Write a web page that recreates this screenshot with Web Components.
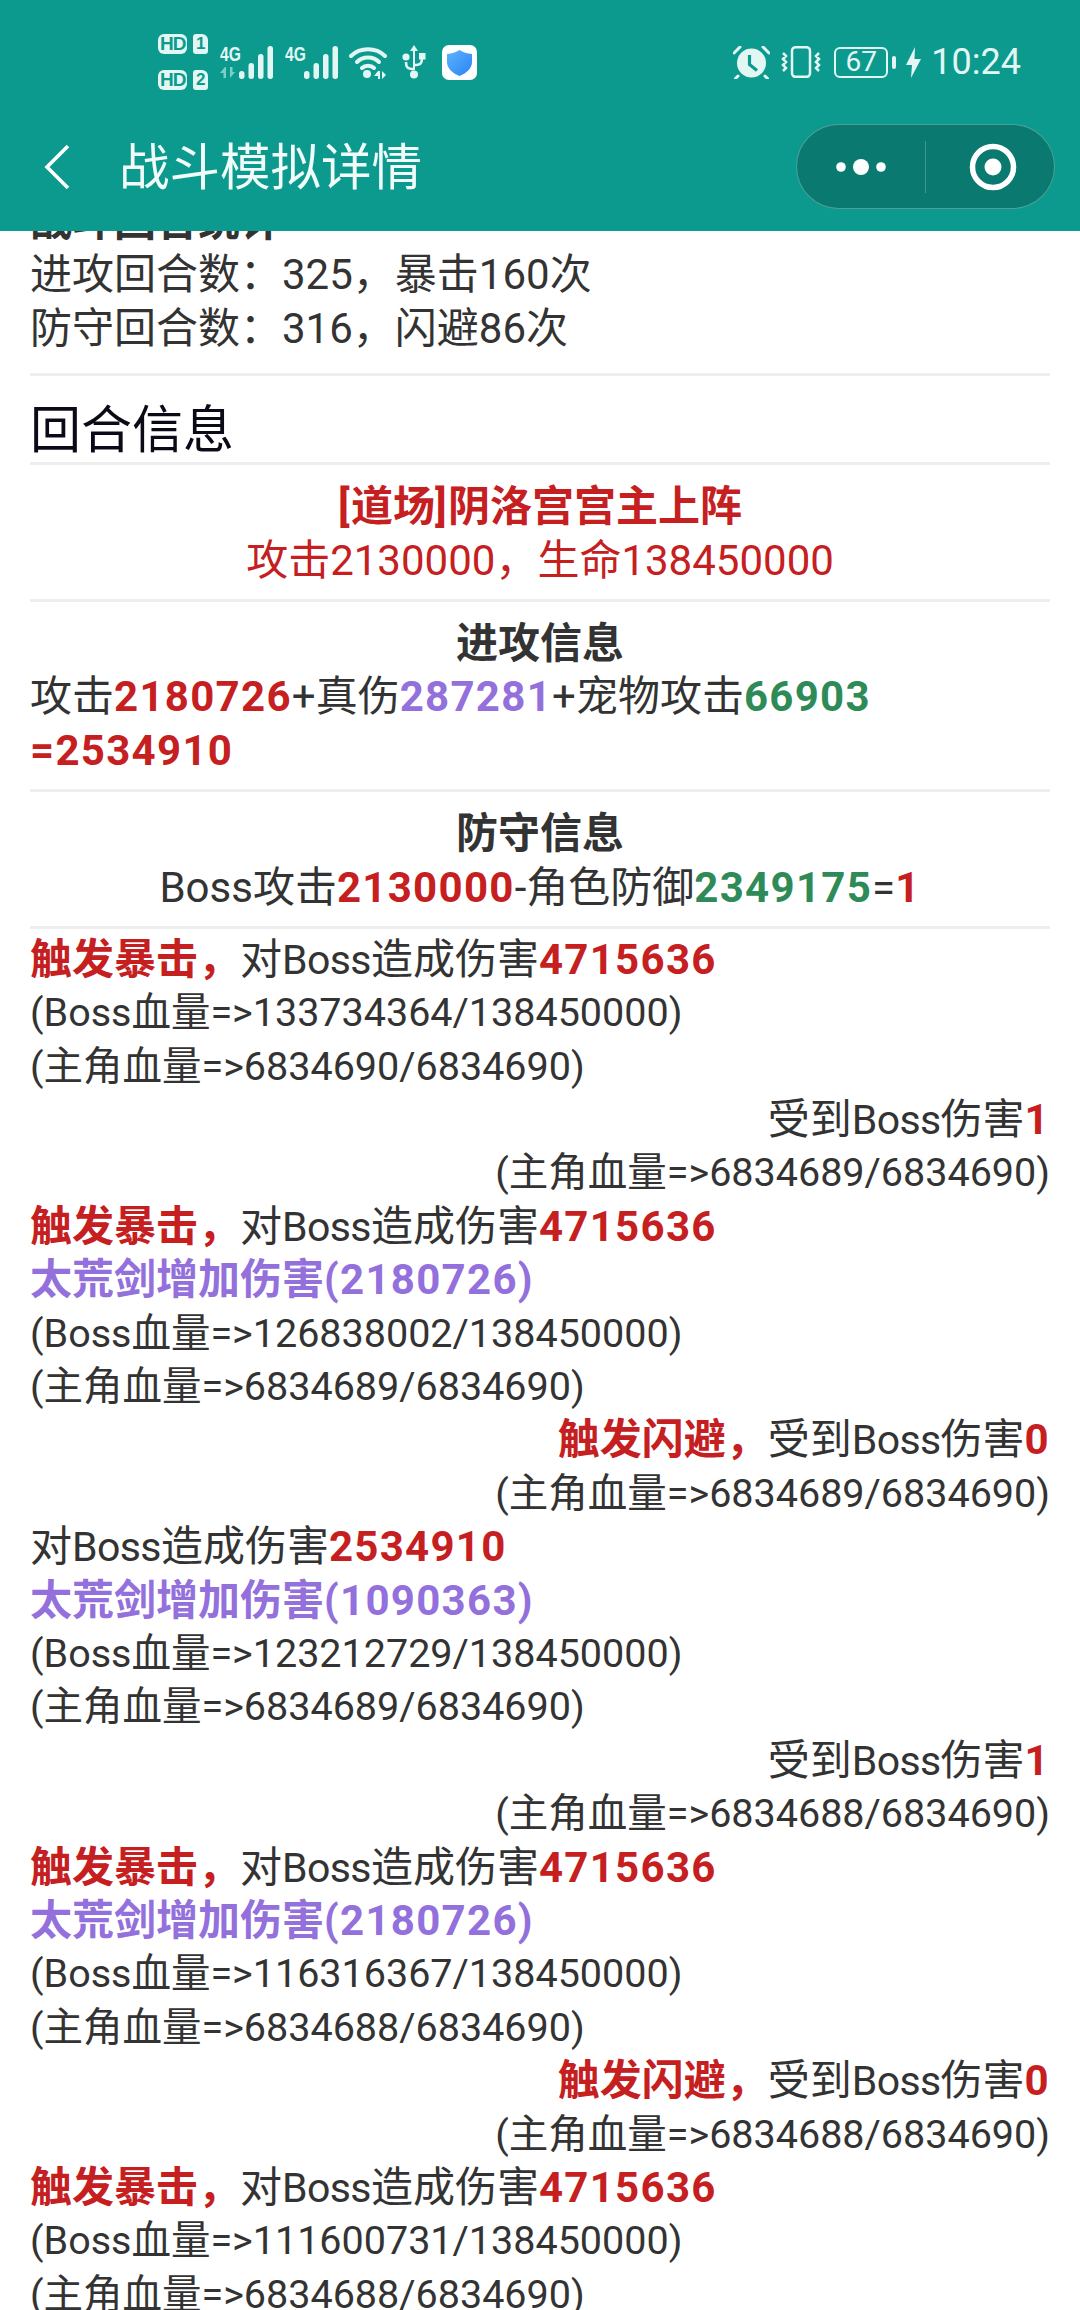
<!DOCTYPE html>
<html lang="zh">
<head>
<meta charset="utf-8">
<title>战斗模拟详情</title>
<style>
    html, body { margin: 0; padding: 0; background: #fff; }
    body { width: 1080px; height: 2310px; overflow: hidden; font-family: Roboto, "Noto Sans CJK SC", sans-serif; }
</style>
</head>
<body>
<battle-page>
    <phone-status slot="status"></phone-status>
    <nav-bar slot="nav" title="战斗模拟详情"></nav-bar>

    <info-block>
        <log-line><log-hl kind="bold">战斗回合统计</log-hl></log-line>
        <log-line>进攻回合数：325，暴击160次</log-line>
        <log-line>防守回合数：316，闪避86次</log-line>
    </info-block>
    <info-block kind="title">回合信息</info-block>
    <info-block kind="round">
        <log-line align="center"><log-hl kind="red">[道场]阴洛宫宫主上阵</log-hl></log-line>
        <log-line align="center" color="red">攻击2130000，生命138450000</log-line>
    </info-block>
    <info-block kind="round">
        <log-line align="center"><log-hl kind="bold">进攻信息</log-hl></log-line>
        <log-line>攻击<log-hl kind="red">2180726</log-hl>+真伤<log-hl kind="purple">287281</log-hl>+宠物攻击<log-hl kind="green">66903</log-hl></log-line>
        <log-line><log-hl kind="red">=2534910</log-hl></log-line>
    </info-block>
    <info-block kind="round">
        <log-line align="center"><log-hl kind="bold">防守信息</log-hl></log-line>
        <log-line align="center">Boss攻击<log-hl kind="red">2130000</log-hl>-角色防御<log-hl kind="green">2349175</log-hl>=<log-hl kind="red">1</log-hl></log-line>
    </info-block>
    <info-block kind="log">
        <log-line><log-hl kind="red">触发暴击，</log-hl>对Boss造成伤害<log-hl kind="red">4715636</log-hl></log-line>
        <log-line hp>(Boss血量=&gt;133734364/138450000)</log-line>
        <log-line hp>(主角血量=&gt;6834690/6834690)</log-line>
        <log-line align="right">受到Boss伤害<log-hl kind="red">1</log-hl></log-line>
        <log-line hp align="right">(主角血量=&gt;6834689/6834690)</log-line>

        <log-line><log-hl kind="red">触发暴击，</log-hl>对Boss造成伤害<log-hl kind="red">4715636</log-hl></log-line>
        <log-line><log-hl kind="purple">太荒剑增加伤害(2180726)</log-hl></log-line>
        <log-line hp>(Boss血量=&gt;126838002/138450000)</log-line>
        <log-line hp>(主角血量=&gt;6834689/6834690)</log-line>
        <log-line align="right"><log-hl kind="red">触发闪避，</log-hl>受到Boss伤害<log-hl kind="red">0</log-hl></log-line>
        <log-line hp align="right">(主角血量=&gt;6834689/6834690)</log-line>

        <log-line>对Boss造成伤害<log-hl kind="red">2534910</log-hl></log-line>
        <log-line><log-hl kind="purple">太荒剑增加伤害(1090363)</log-hl></log-line>
        <log-line hp>(Boss血量=&gt;123212729/138450000)</log-line>
        <log-line hp>(主角血量=&gt;6834689/6834690)</log-line>
        <log-line align="right">受到Boss伤害<log-hl kind="red">1</log-hl></log-line>
        <log-line hp align="right">(主角血量=&gt;6834688/6834690)</log-line>

        <log-line><log-hl kind="red">触发暴击，</log-hl>对Boss造成伤害<log-hl kind="red">4715636</log-hl></log-line>
        <log-line><log-hl kind="purple">太荒剑增加伤害(2180726)</log-hl></log-line>
        <log-line hp>(Boss血量=&gt;116316367/138450000)</log-line>
        <log-line hp>(主角血量=&gt;6834688/6834690)</log-line>
        <log-line align="right"><log-hl kind="red">触发闪避，</log-hl>受到Boss伤害<log-hl kind="red">0</log-hl></log-line>
        <log-line hp align="right">(主角血量=&gt;6834688/6834690)</log-line>

        <log-line><log-hl kind="red">触发暴击，</log-hl>对Boss造成伤害<log-hl kind="red">4715636</log-hl></log-line>
        <log-line hp>(Boss血量=&gt;111600731/138450000)</log-line>
        <log-line hp>(主角血量=&gt;6834688/6834690)</log-line>
    </info-block>
</battle-page>

<script>
const TEAL = '#0c9a8e';
const ICON = '#e2f7f4';

class BattlePage extends HTMLElement {
    connectedCallback() {
        const shadow = this.attachShadow({ mode: 'open' });
        shadow.innerHTML = `
            <style>
                :host { display: flex; flex-direction: column; width: 1080px; height: 2310px; overflow: hidden; }
                header { flex: none; height: 231px; background: ${TEAL}; position: relative; z-index: 1; }
                main { flex: 1; min-height: 0; overflow: hidden; padding: 0 30px; }
                .scrolled { margin-top: -36px; }
            </style>
            <header><slot name="status"></slot><slot name="nav"></slot></header>
            <main><div class="scrolled"><slot></slot></div></main>
        `;
    }
}

class PhoneStatus extends HTMLElement {
    connectedCallback() {
        const shadow = this.attachShadow({ mode: 'open' });
        const bars = `
            <rect x="0" y="25" width="5.500" height="8" rx="2.700"/>
            <rect x="9.500" y="17" width="5.500" height="16" rx="2.700"/>
            <rect x="19" y="8" width="5.500" height="25" rx="2.700"/>
            <rect x="28.500" y="0" width="5.500" height="33" rx="2.700"/>`;
        shadow.innerHTML = `
            <style>
                :host { display: flex; align-items: center; height: 124px; box-sizing: border-box; padding: 0 59px 0 158px; color: ${ICON}; font-family: Roboto, sans-serif; }
                svg { display: block; flex: none; fill: ${ICON}; }
                .hd { display: flex; flex-direction: column; gap: 16px; width: 50px; flex: none; }
                .hd-row { display: flex; gap: 6px; }
                .tag { height: 20px; background: ${ICON}; color: ${TEAL}; font: 700 19px/20px "Liberation Sans", sans-serif; text-align: center; }
                .tag.hd-t { width: 30px; border-radius: 6px; letter-spacing: -1px; }
                .tag.num { width: 15px; border-radius: 3px 6px 3px 3px; font-size: 17px; }
                .sig { position: relative; width: 53px; height: 33px; margin-left: 12px; flex: none; }
                .sig b { position: absolute; left: 0; top: 0; font: 700 20px/16px "Liberation Sans", sans-serif; transform: scaleX(.78); transform-origin: left top; }
                .sig svg.bars { position: absolute; right: 0; top: 0; }
                .sig svg.updown { position: absolute; left: 0; top: 21px; fill: #7fcdc5; }
                .right { margin-left: auto; display: flex; align-items: center; }
                .bat { width: 54px; height: 31px; box-sizing: border-box; border: 2.500px solid ${ICON}; border-radius: 6px; margin-left: 13px; text-align: center; font: 400 28px/26px Roboto, sans-serif; }
                .nub { width: 4px; height: 13px; background: ${ICON}; border-radius: 2px; margin-left: 4px; }
                .time { font: 400 36px/40px Roboto, sans-serif; margin-left: 10px; }
            </style>
            <div class="hd">
                <div class="hd-row"><span class="tag hd-t">HD</span><span class="tag num">1</span></div>
                <div class="hd-row"><span class="tag hd-t">HD</span><span class="tag num">2</span></div>
            </div>
            <div class="sig"><b>4G</b>
                <svg class="updown" width="17" height="11" viewBox="0 0 17 11"><path d="M5 0L0 6h3.500v5h2.500V0zM10 0v11l5-6h-2.500V0z"/></svg>
                <svg class="bars" width="34" height="33" viewBox="0 0 34 33">${bars}</svg>
            </div>
            <div class="sig"><b>4G</b>
                <svg class="bars" width="34" height="33" viewBox="0 0 34 33">${bars}</svg>
            </div>
            <svg width="38" height="33" viewBox="0 0 38 33" style="margin-left:11px">
                <g fill="none" stroke="${ICON}" stroke-width="4" stroke-linecap="round">
                    <path d="M2 10C11 1 27 1 36 10"/>
                    <path d="M8 16C14 10 24 10 30 16"/>
                    <path d="M13 22C16 19 22 19 25 22"/>
                </g>
                <circle cx="18" cy="28" r="4"/>
                <path d="M29 25l-4 5h4v3h2v-8zM33 25v8l4-4z"/>
            </svg>
            <svg width="24" height="34" viewBox="0 0 24 34" style="margin-left:15px">
                <path d="M12 0l4 6h-3v19h-2V6H8z"/>
                <path d="M12 20c7 0 8-2 8-7M12 24c-7 0-8-2-8-7" fill="none" stroke="${ICON}" stroke-width="2.600"/>
                <circle cx="4" cy="12" r="3.600"/><rect x="17" y="8" width="6.500" height="6.500"/>
                <circle cx="12" cy="29.500" r="4"/>
            </svg>
            <svg width="35" height="35" viewBox="0 0 35 35" style="margin-left:16px">
                <defs><linearGradient id="sh" x1="0" y1="0" x2="1" y2="1"><stop offset="0" stop-color="#5db4fb"/><stop offset="1" stop-color="#2b83f6"/></linearGradient></defs>
                <rect width="35" height="35" rx="7" fill="#fff"/>
                <path d="M17.500 5C21 7.500 25 8.500 30 9V17C30 23 25 28 17.500 31C10 28 5 23 5 17V9C10 8.500 14 7.500 17.500 5Z" fill="url(#sh)"/>
            </svg>
            <div class="right">
                <svg width="37" height="33" viewBox="0 0 37 33">
                    <circle cx="18.500" cy="17" r="14.500"/>
                    <path d="M16.500 9v9.500l7.500 6" fill="none" stroke="${TEAL}" stroke-width="3.200"/>
                    <path d="M1 7L7 1M36 7L30 1M5 30L2.500 32.500M32 30L34.500 32.500" fill="none" stroke="${ICON}" stroke-width="3" stroke-linecap="round"/>
                </svg>
                <svg width="40" height="32" viewBox="0 0 40 32" style="margin-left:11px">
                    <rect x="11" y="1.200" width="18" height="29.600" rx="3.500" fill="none" stroke="${ICON}" stroke-width="2.500"/>
                    <path d="M2 7l3 3-3 3 3 3-3 3 3 3-3 3M38 7l-3 3 3 3-3 3 3 3-3 3 3 3" fill="none" stroke="${ICON}" stroke-width="2.500"/>
                </svg>
                <div class="bat">67</div><div class="nub"></div>
                <svg width="15" height="31" viewBox="0 0 15 31" style="margin-left:10px">
                    <path d="M9 0L0 18h6l-1 13 10-19H8.500z"/>
                </svg>
                <div class="time">10:24</div>
            </div>
        `;
    }
}

class NavBar extends HTMLElement {
    connectedCallback() {
        const shadow = this.attachShadow({ mode: 'open' });
        shadow.innerHTML = `
            <style>
                :host { display: flex; align-items: center; height: 85px; box-sizing: border-box; padding: 0 25px 0 44px; color: #fff; }
                h1 { margin: 3px 0 0 49px; font: 400 50.500px/60px Roboto, "Noto Sans CJK SC", sans-serif; color: #f1fbfa; }
                .capsule { margin-left: auto; width: 259px; height: 85px; box-sizing: border-box; border: 1.500px solid rgba(255,255,255,.28); border-radius: 43px; background: #0a7a71; display: grid; grid-template-columns: 1fr 1px 1fr; align-items: center; justify-items: center; }
                .sep { width: 1px; height: 52px; background: rgba(255,255,255,.22); }
                svg { display: block; }
                .target { margin-left: 5px; }
            </style>
            <svg width="26" height="46" viewBox="0 0 26 46">
                <path d="M24 2L3 23l21 21" fill="none" stroke="#fff" stroke-width="3.600"/>
            </svg>
            <h1>${this.getAttribute('title')}</h1>
            <div class="capsule">
                <svg width="52" height="20" viewBox="0 0 52 20" fill="#fff"><circle cx="6" cy="10" r="4.800"/><circle cx="26" cy="10" r="8"/><circle cx="46" cy="10" r="4.800"/></svg>
                <div class="sep"></div>
                <svg class="target" width="50" height="50" viewBox="0 0 50 50"><circle cx="25" cy="25" r="20.500" fill="none" stroke="#fff" stroke-width="5.500"/><circle cx="25" cy="25" r="8.500" fill="#fff"/></svg>
            </div>
        `;
    }
}

// upper blocks keep plain digits, the round log below has tighter ones
class InfoBlock extends HTMLElement {
    connectedCallback() {
        const shadow = this.attachShadow({ mode: 'open' });
        shadow.innerHTML = `
            <style>
                :host { display: block; box-sizing: border-box; padding-bottom: 18px; border-bottom: 3px solid #eeeeee; --num-size: 42px; --num-track: 0px; }
                :host([kind="title"]) { padding: 24px 0 0; font-size: 51px; line-height: 62px; color: #0b0b18; }
                :host([kind="round"]) { padding: 15px 0 12px; }
                :host([kind="log"]) { padding: 4px 0 0; border-bottom: none; --num-size: 41px; --num-track: -0.600px; }
            </style>
            <slot></slot>
        `;
    }
}

// each line is one row, the numbers inside must not push it taller
class LogLine extends HTMLElement {
    connectedCallback() {
        const shadow = this.attachShadow({ mode: 'open' });
        shadow.innerHTML = `<style>
                :host { display: block; height: 53.400px; font-size: 42px; line-height: 53.400px; color: #333333; white-space: nowrap; }
                :host([align="center"]) { text-align: center; }
                :host([align="right"]) { text-align: right; }
                :host([color="red"]) { color: #c5201f; }
                :host([hp]) { font-size: 39.500px; --num-size: 39.500px; --num-track: 0px; }
            </style><slot></slot>`;
    }
}

class LogHl extends HTMLElement {
    connectedCallback() {
        const shadow = this.attachShadow({ mode: 'open' });
        shadow.innerHTML = `<style>
                :host { display: inline; font-weight: 700; --num-size: 42px; --num-track: 1.300px; }
                :host([kind="red"]) { color: #c5201f; }
                :host([kind="purple"]) { color: #9370db; }
                :host([kind="green"]) { color: #2e8b57; }
                :host([kind="bold"]) { color: #333333; }
            </style><slot></slot>`;
    }
}

class LogNum extends HTMLElement {
    connectedCallback() {
        const shadow = this.attachShadow({ mode: 'open' });
        shadow.innerHTML = `<style>
                :host { display: inline; font-size: var(--num-size, 42px); letter-spacing: var(--num-track, 0px); }
            </style><slot></slot>`;
    }
}

function wrapLatin(node) {
    for (const child of Array.from(node.childNodes)) {
        if (child.nodeType === Node.ELEMENT_NODE) {
            wrapLatin(child);
        } else if (child.nodeType === Node.TEXT_NODE) {
            const parts = child.textContent.split(/([\x21-\x7e]+)/);
            if (parts.length < 2) continue;
            const frag = document.createDocumentFragment();
            parts.forEach((part, i) => {
                if (i % 2) {
                    const num = document.createElement('log-num');
                    num.textContent = part;
                    frag.appendChild(num);
                } else if (part) {
                    frag.appendChild(document.createTextNode(part));
                }
            });
            child.replaceWith(frag);
        }
    }
}
document.querySelectorAll('log-line').forEach(wrapLatin);

customElements.define('battle-page', BattlePage);
customElements.define('phone-status', PhoneStatus);
customElements.define('nav-bar', NavBar);
customElements.define('info-block', InfoBlock);
customElements.define('log-line', LogLine);
customElements.define('log-hl', LogHl);
customElements.define('log-num', LogNum);
</script>
</body>
</html>
